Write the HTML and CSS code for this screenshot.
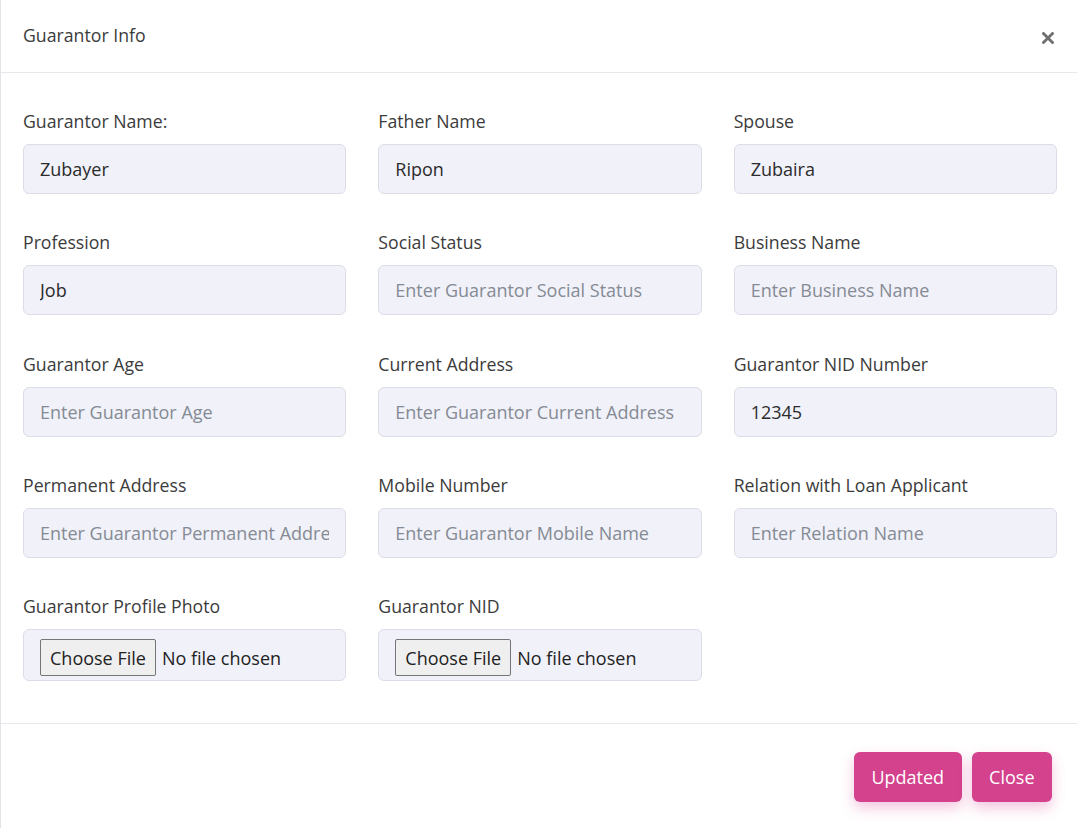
FILE: index.html
```html
<!DOCTYPE html>
<html lang="en">
<head>
<meta charset="utf-8">
<title>Guarantor Info</title>
<link rel="stylesheet" href="styles.css">
</head>
<body>
<div class="modal">
  <div class="modal-header">
    <h5 class="modal-title">Guarantor Info</h5>
    <button class="btn-close" type="button" aria-label="Close">
      <svg width="12" height="12" viewBox="0 0 12 12"><path d="M1.5 1.5 L10.5 10.5 M10.5 1.5 L1.5 10.5" stroke="#6f6f6f" stroke-width="2.8" stroke-linecap="square"/></svg>
    </button>
  </div>
  <div class="modal-body">
    <div class="field"><label>Guarantor Name:</label><input class="control" type="text" value="Zubayer"></div>
    <div class="field"><label>Father Name</label><input class="control" type="text" value="Ripon"></div>
    <div class="field"><label>Spouse</label><input class="control" type="text" value="Zubaira"></div>

    <div class="field"><label>Profession</label><input class="control" type="text" value="Job"></div>
    <div class="field"><label>Social Status</label><input class="control" type="text" placeholder="Enter Guarantor Social Status"></div>
    <div class="field"><label>Business Name</label><input class="control" type="text" placeholder="Enter Business Name"></div>

    <div class="field"><label>Guarantor Age</label><input class="control" type="text" placeholder="Enter Guarantor Age"></div>
    <div class="field"><label>Current Address</label><input class="control" type="text" placeholder="Enter Guarantor Current Address"></div>
    <div class="field"><label>Guarantor NID Number</label><input class="control" type="text" value="12345"></div>

    <div class="field"><label>Permanent Address</label><input class="control" type="text" placeholder="Enter Guarantor Permanent Address"></div>
    <div class="field"><label>Mobile Number</label><input class="control" type="text" placeholder="Enter Guarantor Mobile Name"></div>
    <div class="field"><label>Relation with Loan Applicant</label><input class="control" type="text" placeholder="Enter Relation Name"></div>

    <div class="field"><label>Guarantor Profile Photo</label><input class="control file" type="file"></div>
    <div class="field"><label>Guarantor NID</label><input class="control file" type="file"></div>
  </div>
  <div class="modal-footer">
    <button class="btn" type="button">Updated</button>
    <button class="btn" type="button">Close</button>
  </div>
</div>
</body>
</html>
```
FILE: styles.css
```css
* { box-sizing: border-box; }
html, body { margin: 0; padding: 0; background: #fff; }
body {
  font-family: "Open Sans", "Noto Sans", sans-serif;
  font-size: 17.7px;
  color: #3b3b3b;
}
.modal {
  width: 1077px;
  min-height: 828px;
  border-left: 1px solid #e3e4ea;
  background: #fff;
}
.modal-header {
  height: 73px;
  border-bottom: 1px solid #e7e8ee;
  display: flex;
  align-items: flex-start;
  justify-content: space-between;
  padding: 22px 22px 0 22px;
}
.modal-title {
  margin: 0;
  font-size: 17.7px;
  font-weight: 400;
  line-height: 26px;
  color: #3b3b3b;
}
.btn-close {
  border: 0;
  background: transparent;
  padding: 0;
  margin-top: 10px;
  margin-right: 1px;
  width: 12px;
  height: 12px;
  display: flex;
}
.modal-body {
  display: grid;
  grid-template-columns: 1fr 1fr 1fr;
  column-gap: 32px;
  row-gap: 36.25px;
  padding: 36px 20px 42px 22px;
}
.field { display: flex; flex-direction: column; }
.field label {
  line-height: 24px;
  margin-bottom: 11px;
  color: #3b3b3b;
}
.control {
  height: 50px;
  width: 100%;
  border: 1px solid #dcdde6;
  border-radius: 6px;
  background: #f0f1f9;
  padding: 0 16px;
  font-family: inherit;
  font-size: 18px;
  color: #2b2b2b;
  outline: none;
}
.control::placeholder { color: #858b94; }
.control.file {
  height: 52px;
  padding: 9px 16px;
  color: #222;
}
.control.file::file-selector-button {
  font-family: inherit;
  font-size: 18px;
  height: 37px;
  padding: 0 9px;
  margin-right: 6px;
  background: #efefef;
  border: 1px solid #767676;
  border-radius: 2px;
  color: #222;
}
.modal-footer {
  border-top: 1px solid #e7e8ee;
  display: flex;
  justify-content: flex-end;
  gap: 10px;
  padding: 28px 25px 26px;
}
.btn {
  height: 50px;
  padding: 0 17.5px;
  border: 0;
  border-radius: 6px;
  background: #d4418d;
  color: #fff;
  font-family: inherit;
  font-size: 18px;
  font-weight: 500;
  box-shadow: 0 6px 14px rgba(212, 65, 141, 0.3);
}
```
